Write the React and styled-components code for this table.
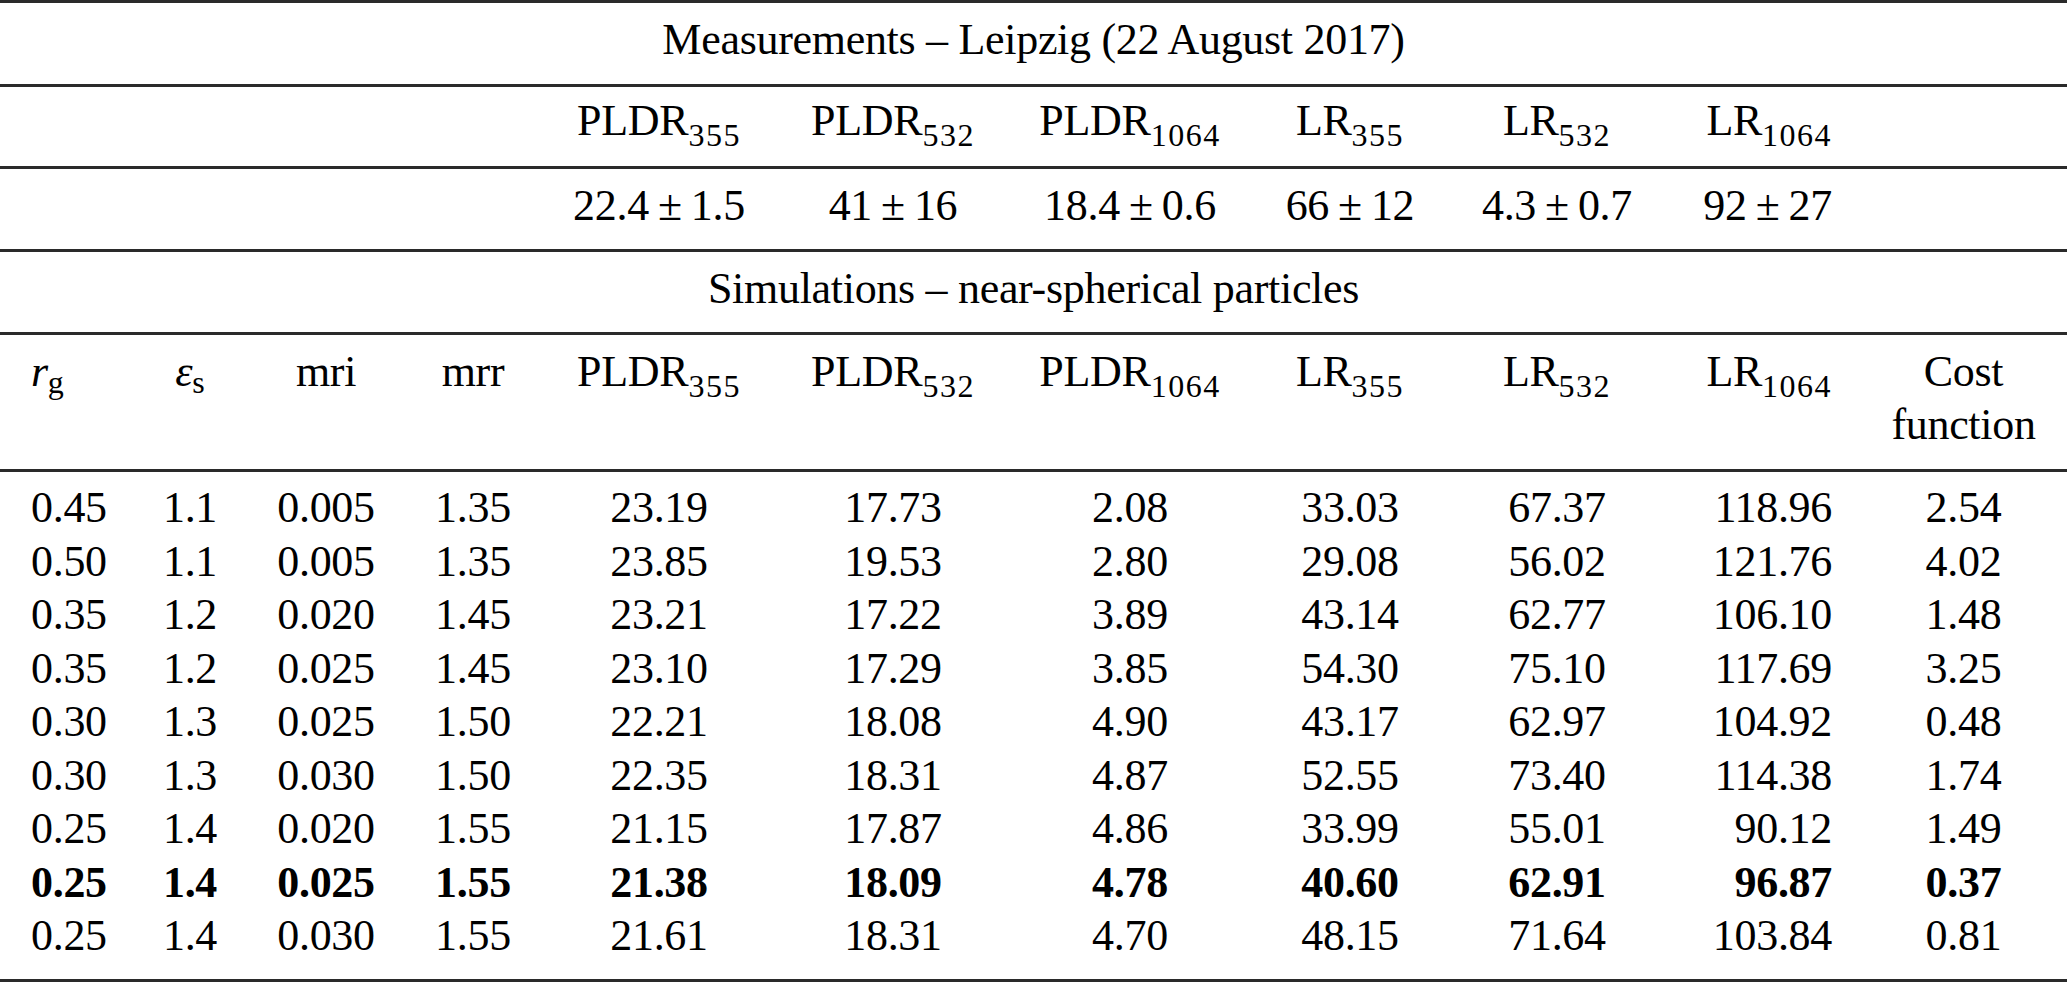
import React from "react";
import styled, { createGlobalStyle } from "styled-components";

const GlobalStyle = createGlobalStyle`
  html, body { margin: 0; padding: 0; background: #fff; }
  body {
    font-family: "Liberation Serif", "Times New Roman", serif;
    color: #000;
  }
`;

const COLS = "118px 144px 128px 166px 206px 262px 212px 228px 186px 210px 207px";
const ALIGN = ["left", "center", "center", "center", "center", "center", "center", "center", "center", "right", "center"];
const RULE = "3px solid #2a2a2a";

const Table = styled.div`
  width: 2067px;
  border-top: ${RULE};
  font-size: 44px;
  letter-spacing: -0.3px;
  line-height: 53.5px;
`;

const Band = styled.div`
  display: grid;
  grid-template-columns: ${COLS};
  align-items: start;
  padding: ${(p) => p.$pt}px 0 ${(p) => p.$pb}px;
  border-bottom: ${RULE};
`;

const Cell = styled.div`
  grid-column: ${(p) => p.$col || "auto"};
  text-align: ${(p) => p.$align || "center"};
  padding-left: ${(p) => (p.$align === "left" ? "31px" : "0")};
  padding-right: ${(p) => (p.$align === "right" ? "28px" : "0")};
  font-weight: ${(p) => (p.$bold ? 700 : 400)};
  white-space: nowrap;
`;

const Sub = styled.sub`
  font-size: 32px;
  letter-spacing: ${(p) => (p.$tight ? "0" : "1.5px")};
  vertical-align: ${(p) => -p.$shift}px;
  line-height: 0;
`;

const Var = styled.span`
  font-style: italic;
`;

const Pm = styled.span`
  margin: 0 9px;
`;

const measured = [
  ["22.4", "1.5"],
  ["41", "16"],
  ["18.4", "0.6"],
  ["66", "12"],
  ["4.3", "0.7"],
  ["92", "27"],
];

const quantities = [
  ["PLDR", "355"],
  ["PLDR", "532"],
  ["PLDR", "1064"],
  ["LR", "355"],
  ["LR", "532"],
  ["LR", "1064"],
];

const rows = [
  ["0.45", "1.1", "0.005", "1.35", "23.19", "17.73", "2.08", "33.03", "67.37", "118.96", "2.54"],
  ["0.50", "1.1", "0.005", "1.35", "23.85", "19.53", "2.80", "29.08", "56.02", "121.76", "4.02"],
  ["0.35", "1.2", "0.020", "1.45", "23.21", "17.22", "3.89", "43.14", "62.77", "106.10", "1.48"],
  ["0.35", "1.2", "0.025", "1.45", "23.10", "17.29", "3.85", "54.30", "75.10", "117.69", "3.25"],
  ["0.30", "1.3", "0.025", "1.50", "22.21", "18.08", "4.90", "43.17", "62.97", "104.92", "0.48"],
  ["0.30", "1.3", "0.030", "1.50", "22.35", "18.31", "4.87", "52.55", "73.40", "114.38", "1.74"],
  ["0.25", "1.4", "0.020", "1.55", "21.15", "17.87", "4.86", "33.99", "55.01", "90.12", "1.49"],
  ["0.25", "1.4", "0.025", "1.55", "21.38", "18.09", "4.78", "40.60", "62.91", "96.87", "0.37"],
  ["0.25", "1.4", "0.030", "1.55", "21.61", "18.31", "4.70", "48.15", "71.64", "103.84", "0.81"],
];
const BEST = 7;

function Quantity({ name, wl }) {
  return (
    <>
      {name}
      <Sub $shift={11}>{wl}</Sub>
    </>
  );
}

export default function App() {
  return (
    <>
      <GlobalStyle />
      <Table>
        <Band $pt={9.5} $pb={17.5}>
          <Cell $col="1 / -1">Measurements – Leipzig (22 August 2017)</Cell>
        </Band>

        <Band $pt={7} $pb={18.5}>
          {quantities.map(([n, w], i) => (
            <Cell key={n + w} $col={i + 5} $align={ALIGN[i + 4]}>
              <Quantity name={n} wl={w} />
            </Cell>
          ))}
        </Band>

        <Band $pt={10} $pb={16.5}>
          {measured.map(([v, e], i) => (
            <Cell key={i} $col={i + 5} $align={ALIGN[i + 4]}>
              {v}
              <Pm>±</Pm>
              {e}
            </Cell>
          ))}
        </Band>

        <Band $pt={10} $pb={16.5}>
          <Cell $col="1 / -1">Simulations – near-spherical particles</Cell>
        </Band>

        <Band $pt={10} $pb={17}>
          <Cell $align="left">
            <Var>r</Var>
            <Sub $shift={7} $tight>g</Sub>
          </Cell>
          <Cell>
            <Var>ε</Var>
            <Sub $shift={7} $tight>s</Sub>
          </Cell>
          <Cell>mri</Cell>
          <Cell>mrr</Cell>
          {quantities.map(([n, w], i) => (
            <Cell key={n + w} $align={ALIGN[i + 4]}>
              <Quantity name={n} wl={w} />
            </Cell>
          ))}
          <Cell>
            Cost
            <br />
            function
          </Cell>
        </Band>

        <Band $pt={9.5} $pb={16}>
          {rows.map((r, ri) =>
            r.map((v, ci) => (
              <Cell key={ri + "-" + ci} $align={ALIGN[ci]} $bold={ri === BEST}>
                {v}
              </Cell>
            ))
          )}
        </Band>
      </Table>
    </>
  );
}
